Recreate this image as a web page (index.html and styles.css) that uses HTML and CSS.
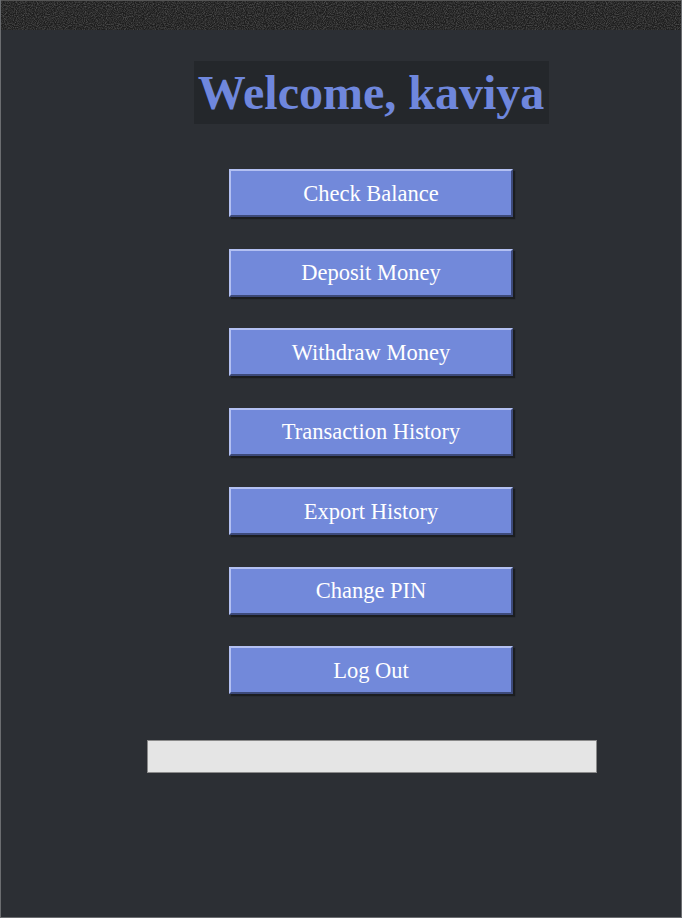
FILE: index.html
```html
<!DOCTYPE html>
<html>
<head>
<meta charset="utf-8">
<link rel="stylesheet" href="styles.css">
</head>
<body>
<div class="frame">
  <div class="topbar">
    <svg class="noise" width="100%" height="100%" preserveAspectRatio="none">
      <filter id="n"><feTurbulence type="fractalNoise" baseFrequency="0.9" numOctaves="2" seed="3"/><feColorMatrix values="0 0 0 0 0.13  0 0 0 0 0.13  0 0 0 0 0.13  0 0 0 1.4 -0.5"/></filter>
      <rect width="100%" height="100%" filter="url(#n)"/>
    </svg>
  </div>
  <main class="content">
    <h1 class="title">Welcome, kaviya</h1>
    <div class="menu">
      <button class="btn">Check Balance</button>
      <button class="btn">Deposit Money</button>
      <button class="btn">Withdraw Money</button>
      <button class="btn">Transaction History</button>
      <button class="btn">Export History</button>
      <button class="btn">Change PIN</button>
      <button class="btn">Log Out</button>
    </div>
    <div class="output"></div>
  </main>
</div>
</body>
</html>
```
FILE: styles.css
```css
html, body {
  margin: 0;
  padding: 0;
  background: #2c2f34;
}
.frame {
  box-sizing: border-box;
  width: 682px;
  height: 918px;
  border: 1px solid #6b6d70;
  border-top: none;
  background: #2c2f34;
  display: flex;
  flex-direction: column;
}
.topbar {
  height: 30px;
  background: #1e1e1e;
  flex-shrink: 0;
  border-top: 1px solid #555;
  box-sizing: border-box;
}
.noise {
  display: block;
}
.content {
  padding-left: 60px;
  padding-top: 31px;
  display: flex;
  flex-direction: column;
  align-items: center;
}
.title {
  margin: 0;
  background: #24272b;
  color: #6f87dd;
  font-family: "Liberation Serif", "Times New Roman", serif;
  font-weight: bold;
  font-size: 48px;
  line-height: 53px;
  padding: 5px 0;
  width: 355px;
  text-align: center;
  white-space: nowrap;
}
.menu {
  margin-top: 45px;
  display: flex;
  flex-direction: column;
  gap: 31.5px;
}
.btn {
  box-sizing: border-box;
  width: 284px;
  height: 48px;
  background: #7289da;
  color: #ffffff;
  font-family: "Liberation Serif", "Times New Roman", serif;
  font-size: 22.5px;
  border-style: solid;
  border-width: 2px;
  border-color: #b3c0f2 #3d4a7a #3d4a7a #b3c0f2;
  box-shadow: 2px 2px 1px #1b1d20;
  padding: 1px 0 0 0;
}
.output {
  margin-top: 46px;
  margin-left: 2px;
  box-sizing: border-box;
  width: 450px;
  height: 33px;
  background: #e5e5e5;
  border: 1px solid #8a8a8a;
}
```
